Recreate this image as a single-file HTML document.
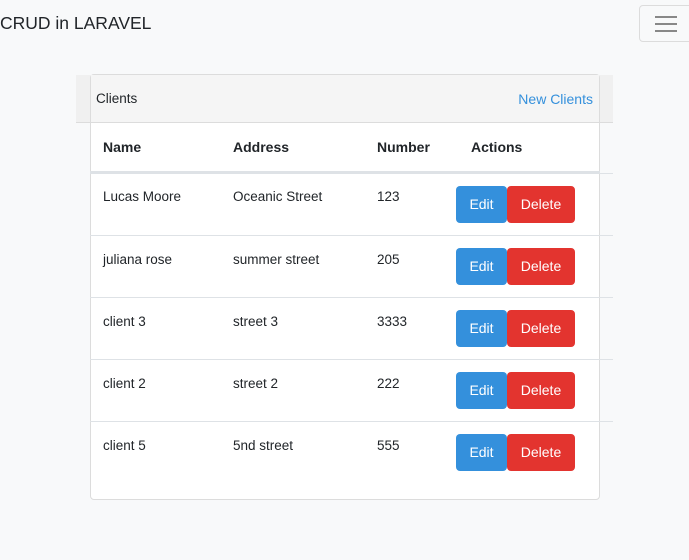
<!DOCTYPE html>
<html><head><style>
*{margin:0;padding:0;box-sizing:border-box}
body{width:689px;height:560px;background:#f8f9fa;font-family:"Liberation Sans",sans-serif;position:relative;overflow:hidden;color:#212529}
.a{position:absolute}
.t{font-size:13.5px;color:#212529}
.h{font-size:14px;font-weight:bold;color:#212529}
.btn{position:absolute;height:37px;color:#fff;font-size:14px;text-align:center;line-height:37px;border-radius:4px}
.e{background:#3490dc;width:51px}
.d{background:#e3342f;width:68px}
.line{position:absolute;height:1px;background:#dee2e6;left:90px;width:523px}
</style></head><body>
<div class="a" style="left:0;top:13px;font-size:17.5px;color:#212529">CRUD in LARAVEL</div>
<div class="a" style="left:639px;top:5px;width:56px;height:37px;border:1px solid #dcdcdc;border-radius:4px">
 <div class="a" style="left:15px;top:10px;width:22px;height:2px;background:#888"></div>
 <div class="a" style="left:15px;top:17px;width:22px;height:2px;background:#888"></div>
 <div class="a" style="left:15px;top:24px;width:22px;height:2px;background:#888"></div>
</div>
<div class="a" style="left:76px;top:75px;width:537px;height:48px;background:#f0f0f0"></div>
<div class="a" style="left:90px;top:74px;width:510px;height:426px;border:1px solid #dcdcdc;border-radius:4px;background:#fff"></div>
<div class="a" style="left:91px;top:75px;width:508px;height:47px;background:#f5f5f5"></div>
<div class="a" style="left:76px;top:122px;width:537px;height:1px;background:#dcdcdc"></div>
<div class="a t" style="left:96px;top:91px;font-size:13.5px">Clients</div>
<div class="a" style="right:96px;top:91px;font-size:14px;color:#3490dc">New Clients</div>
<div class="a h" style="left:103px;top:139px">Name</div>
<div class="a h" style="left:233px;top:139px">Address</div>
<div class="a h" style="left:377px;top:139px">Number</div>
<div class="a h" style="left:471px;top:139px">Actions</div>
<div class="a" style="left:90px;top:171px;width:510px;height:2px;background:#dee2e6"></div>
<div class="line" style="top:173px"></div>
<div class="line" style="top:235px"></div>
<div class="line" style="top:297px"></div>
<div class="line" style="top:359px"></div>
<div class="line" style="top:421px"></div>

<div class="a t" style="left:103px;top:189px">Lucas Moore</div><div class="a t" style="left:233px;top:189px">Oceanic Street</div><div class="a t" style="left:377px;top:189px">123</div>
<div class="btn e" style="left:456px;top:186px">Edit</div><div class="btn d" style="left:507px;top:186px">Delete</div>

<div class="a t" style="left:103px;top:252px">juliana rose</div><div class="a t" style="left:233px;top:252px">summer street</div><div class="a t" style="left:377px;top:252px">205</div>
<div class="btn e" style="left:456px;top:248px">Edit</div><div class="btn d" style="left:507px;top:248px">Delete</div>

<div class="a t" style="left:103px;top:314px">client 3</div><div class="a t" style="left:233px;top:314px">street 3</div><div class="a t" style="left:377px;top:314px">3333</div>
<div class="btn e" style="left:456px;top:310px">Edit</div><div class="btn d" style="left:507px;top:310px">Delete</div>

<div class="a t" style="left:103px;top:376px">client 2</div><div class="a t" style="left:233px;top:376px">street 2</div><div class="a t" style="left:377px;top:376px">222</div>
<div class="btn e" style="left:456px;top:372px">Edit</div><div class="btn d" style="left:507px;top:372px">Delete</div>

<div class="a t" style="left:103px;top:438px">client 5</div><div class="a t" style="left:233px;top:438px">5nd street</div><div class="a t" style="left:377px;top:438px">555</div>
<div class="btn e" style="left:456px;top:434px">Edit</div><div class="btn d" style="left:507px;top:434px">Delete</div>
</body></html>
